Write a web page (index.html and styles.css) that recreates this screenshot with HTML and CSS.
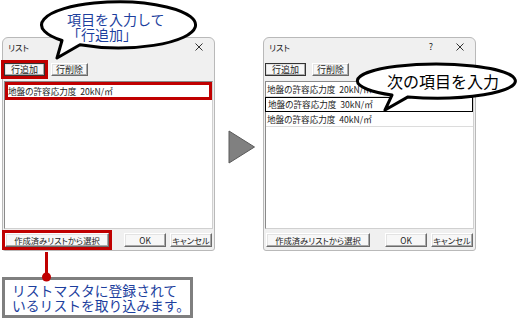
FILE: index.html
```html
<!DOCTYPE html>
<html lang="ja">
<head>
<meta charset="UTF-8">
<link rel="stylesheet" href="styles.css">
</head>
<body>
  <div class="page">
    <div class="stage">
      <!-- before -->
      <div class="dialog">
        <div class="titlebar">
          <span class="title">リスト</span>
          <svg class="close" width="8" height="8" viewBox="0 0 8 8"><path d="M0.5 0.5L7.5 7.5M7.5 0.5L0.5 7.5" stroke="#333" stroke-width="1"/></svg>
        </div>
        <div class="toolbar">
          <button class="btn btn-add btn-default mark">行追加</button>
          <button class="btn btn-del">行削除</button>
        </div>
        <div class="list">
          <div class="item item-marked">地盤の許容応力度&nbsp; 20kN/㎡</div>
        </div>
        <div class="footer">
          <button class="btn btn-pick mark">作成済みリストから選択</button>
          <button class="btn btn-ok">OK</button>
          <button class="btn btn-cancel">キャンセル</button>
        </div>
      </div>

      <div class="arrow-col">
        <svg width="28" height="34" viewBox="0 0 28 34"><path d="M1 1L26.5 17L1 33Z" fill="#808080" stroke="#5a5a5a" stroke-width="1"/></svg>
      </div>

      <!-- after -->
      <div class="dialog">
        <div class="titlebar">
          <span class="title">リスト</span>
          <span class="help">?</span>
          <svg class="close" width="8" height="8" viewBox="0 0 8 8"><path d="M0.5 0.5L7.5 7.5M7.5 0.5L0.5 7.5" stroke="#333" stroke-width="1"/></svg>
        </div>
        <div class="toolbar">
          <button class="btn btn-add btn-default">行追加</button>
          <button class="btn btn-del">行削除</button>
        </div>
        <div class="list">
          <div class="item">地盤の許容応力度&nbsp; 20kN/㎡</div>
          <div class="item item-edit">地盤の許容応力度&nbsp; 30kN/㎡</div>
          <div class="item">地盤の許容応力度&nbsp; 40kN/㎡</div>
        </div>
        <div class="footer">
          <button class="btn btn-pick">作成済みリストから選択</button>
          <button class="btn btn-ok">OK</button>
          <button class="btn btn-cancel">キャンセル</button>
        </div>
      </div>
    </div>

    <div class="note">
      <div class="note-line">リストマスタに登録されて</div>
      <div class="note-line">いるリストを取り込みます。</div>
    </div>

    <svg class="overlay" width="520" height="323" viewBox="0 0 520 323">
      <path d="M80 44.8A77 23 0 1 0 62 40.5L57 58Z" fill="#fff" stroke="#000" stroke-width="3" stroke-linejoin="round"/>
      <path d="M408 96.9A79 17 0 1 0 392 95.1L385 110Z" fill="#fff" stroke="#000" stroke-width="3" stroke-linejoin="round"/>
      <rect x="45" y="252" width="3" height="24" fill="#c00000"/>
      <circle cx="46.5" cy="277" r="4.5" fill="#c00000"/>
    </svg>

    <div class="bubble-text bubble-left">
      <div>項目を入力して</div>
      <div class="bracket-line">「行追加」</div>
    </div>
    <div class="bubble-text bubble-right">次の項目を入力</div>
  </div>
</body>
</html>
```

FILE: styles.css
```css
body {
  margin: 0;
  background: #fff;
  font-family: "Noto Sans CJK JP", "Noto Sans", sans-serif;
}

.page {
  position: relative;
  width: 520px;
  height: 323px;
  overflow: hidden;
}

.stage {
  display: flex;
  align-items: flex-start;
  padding: 37px 0 0 2px;
}

.dialog {
  box-sizing: border-box;
  width: 213px;
  height: 214px;
  display: flex;
  flex-direction: column;
  background: #f0f0f0;
  border: 1px solid #b9b9b9;
  border-radius: 6px 6px 3px 3px;
  font-feature-settings: "palt";
  color: #222;
}

.titlebar {
  height: 24px;
  box-sizing: border-box;
  display: flex;
  align-items: center;
  padding: 3px 11px 9px 5px;
  font-size: 8.5px;
  line-height: 12px;
}

.title {
  flex: 1;
}

.help {
  font-size: 9px;
  margin-right: 23px;
}

.close {
  display: block;
}

.toolbar {
  display: flex;
  gap: 6px;
  padding: 1px 0 0 1px;
  margin-bottom: 5px;
}

.btn {
  box-sizing: border-box;
  padding: 0;
  font-family: "Noto Sans CJK JP", sans-serif;
  font-feature-settings: "palt";
  color: #222;
  background: #f7f7f7;
  border: 1px solid;
  border-color: #fff #6b6b6b #6b6b6b #fff;
  box-shadow: inset -1px -1px #a9a9a9, inset 1px 1px #e3e3e3;
  line-height: 1;
}

.btn-add,
.btn-del {
  height: 13px;
  font-size: 9px;
}

.btn-add {
  width: 41px;
}

.btn-del {
  width: 37px;
}

.btn-default {
  border-color: #333;
}

.mark {
  outline: 3px solid #c00000;
}

.list {
  flex: 1;
  margin: 0 1px;
  background: #fff;
  border: 1px solid #8a8a8a;
  border-right-color: #d0d0d0;
  border-bottom-color: #d0d0d0;
}

.item {
  box-sizing: border-box;
  height: 15px;
  line-height: 14px;
  padding-left: 1px;
  font-size: 8.6px;
  border-bottom: 1px solid #dcdcdc;
  white-space: nowrap;
}

.item-marked {
  height: 18px;
  line-height: 12px;
  padding-left: 0;
  border: 3px solid #c00000;
}

.item-edit {
  border: 1px solid #000;
  margin-left: -1px;
  padding-left: 2px;
  line-height: 13px;
}

.footer {
  display: flex;
  padding: 4px 0 3px 2px;
}

.footer .btn {
  height: 14px;
  font-size: 8.3px;
}

.btn-pick {
  width: 104px;
}

.btn-ok {
  width: 42px;
  margin-left: 15px;
}

.btn-cancel {
  width: 42px;
  margin-left: 4px;
}

.arrow-col {
  width: 48px;
  box-sizing: border-box;
  padding: 93px 0 0 13px;
}

.arrow-col svg {
  display: block;
}

/* annotations */
.note {
  position: absolute;
  left: 2px;
  top: 277px;
  box-sizing: border-box;
  width: 191px;
  height: 41px;
  border: 3px solid #7f7f7f;
  background: #fff;
  padding: 3px 0 0 7px;
  font-size: 13.8px;
  color: #1d3f9e;
  white-space: nowrap;
}

.note-line {
  height: 15px;
  line-height: 15px;
}

.overlay {
  position: absolute;
  left: 0;
  top: 0;
}

.bubble-text {
  position: absolute;
  white-space: nowrap;
}

.bubble-left {
  left: 67px;
  top: 12px;
  font-size: 14px;
  line-height: 14.5px;
  color: #1d3f9e;
}

.bubble-left div {
  height: 14.5px;
}

.bubble-right {
  left: 387px;
  top: 72px;
  font-size: 16px;
  line-height: 18px;
  color: #000;
}
```
